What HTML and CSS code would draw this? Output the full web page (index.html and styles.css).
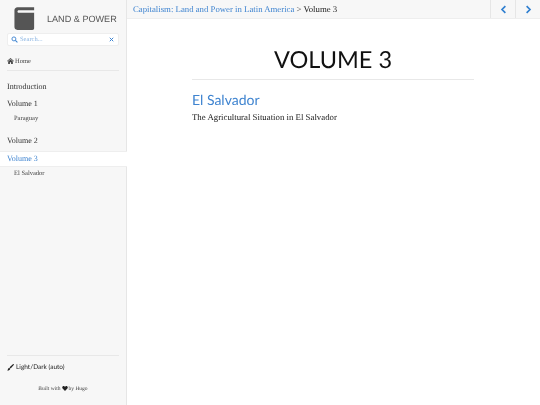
FILE: index.html
```html
<!DOCTYPE html>
<html lang="en">
<head>
<meta charset="utf-8">
<title>Volume 3</title>
<link rel="stylesheet" href="styles.css">
</head>
<body>
<div class="page">
  <aside class="sidebar">
    <div class="brand">
      <svg class="logo" viewBox="0 0 24 26" aria-hidden="true">
        <path fill="#555" d="M4 0H23V3.5H5.5C3.5 3.5 3.5 6.5 5.5 6.5H23V24C23 25.2 22.2 26 21 26H4C1.5 26 .5 24.5 .5 22.5V3.5C.5 1.5 2 0 4 0Z"/>
      </svg>
      <span class="brand-name">LAND &amp; POWER</span>
    </div>
    <div class="search">
      <svg class="search-icon" viewBox="0 0 12 12" aria-hidden="true"><circle cx="5" cy="5" r="3.4" fill="none" stroke="#3f84d0" stroke-width="1.6"/><path d="M7.5 7.5L11 11" stroke="#3f84d0" stroke-width="1.8"/></svg>
      <span class="search-text">Search...</span>
      <svg class="search-clear" viewBox="0 0 10 10" aria-hidden="true"><path d="M1.5 1.5L8.5 8.5M8.5 1.5L1.5 8.5" stroke="#3f84d0" stroke-width="2"/></svg>
    </div>
    <div class="home">
      <svg class="home-icon" viewBox="0 0 12 10" aria-hidden="true"><path fill="#444" d="M6 0L12 5.2L11.3 6L6 1.5L.7 6L0 5.2ZM2 6L6 2.6L10 6V10H7V7H5V10H2Z"/></svg>
      <span>Home</span>
    </div>
    <nav class="nav">
      <a class="nav-item first">Introduction</a>
      <a class="nav-item">Volume 1</a>
      <a class="nav-sub">Paraguay</a>
      <a class="nav-item">Volume 2</a>
      <a class="nav-item active">Volume 3</a>
      <a class="nav-sub">El Salvador</a>
    </nav>
    <div class="side-foot">
      <div class="theme">
        <svg class="theme-icon" viewBox="0 0 10 10" aria-hidden="true"><path fill="#222" d="M9.6.4C10 .8 10 1.2 9.6 1.6L5.2 6.3L3.7 4.8L8.4.4C8.8 0 9.2 0 9.6.4ZM3.2 5.4L4.6 6.8C4.4 8.6 2.6 9.7 .2 9.4C1.3 8.6 1.2 6.2 3.2 5.4Z"/></svg>
        <span>Light/Dark (auto)</span>
      </div>
      <div class="built">Built with <svg class="heart" viewBox="0 0 10 9" aria-hidden="true"><path fill="#222" d="M5 9L.7 4.6C-.3 3.5-.2 1.7.8.8 1.9-.2 3.8 0 5 1.5 6.2 0 8.1-.2 9.2.8 10.2 1.7 10.3 3.5 9.3 4.6Z"/></svg> by Hugo</div>
    </div>
  </aside>
  <div class="main">
    <header class="topbar">
      <div class="crumbs"><a class="link">Capitalism: Land and Power in Latin America</a> <span class="sep">&gt;</span> Volume 3</div>
      <div class="pager">
        <span class="pager-btn"><svg viewBox="0 0 8 12" aria-hidden="true"><path d="M6.5 1.5L2 6L6.5 10.5" fill="none" stroke="#2f7fd0" stroke-width="2.2"/></svg></span>
        <span class="pager-btn"><svg viewBox="0 0 8 12" aria-hidden="true"><path d="M1.5 1.5L6 6L1.5 10.5" fill="none" stroke="#2f7fd0" stroke-width="2.2"/></svg></span>
      </div>
    </header>
    <main class="content">
      <h1 class="title">VOLUME 3</h1>
      <h2 class="section"><a class="link">El Salvador</a></h2>
      <p class="summary">The Agricultural Situation in El Salvador</p>
    </main>
  </div>
</div>
</body>
</html>
```

FILE: styles.css
```css
* { box-sizing: border-box; }
html, body { margin: 0; height: 100%; }
body { font-family: "Liberation Serif", serif; color: #222; background: #fff; text-rendering: geometricPrecision; }
.page { display: flex; width: 540px; height: 405px; overflow: hidden; filter: blur(0.25px); background: #fff; }
.sidebar { width: 127px; flex: none; display: flex; flex-direction: column; background: #f7f7f7; border-right: 1px solid #e6e6e6; }
.brand { display: flex; align-items: center; height: 33px; padding: 5px 0 0 14px; }
.logo { width: 21px; height: 23px; flex: none; margin-top: -1px; }
.brand-name { font-family: "Liberation Sans", sans-serif; font-size: 9.1px; color: #555; margin-left: 12px; line-height: 12px; white-space: nowrap; }
.search { display: flex; align-items: center; height: 13px; margin: 0 7px; padding: 0 3px; background: #fff; border: 1px solid #eee; border-radius: 2px; }
.search-icon { width: 7px; height: 7px; flex: none; }
.search-text { flex: 1; font-size: 6.5px; color: #8db6e2; margin-left: 2px; }
.search-clear { width: 5px; height: 5px; flex: none; margin-right: 1px; }
.home { display: flex; align-items: center; gap: 1px; height: 25px; margin: 0 7px; padding-top: 7px; font-size: 6.5px; color: #444; border-bottom: 1px solid #e8e8e8; }
.home-icon { width: 7px; height: 6px; margin-top: -2px; }
.nav { display: flex; flex-direction: column; }
.nav-item { display: flex; align-items: center; height: 17px; padding-left: 7px; font-size: 8px; color: #333; }
.nav-item.first { margin-top: 7px; }
.nav-item.active { height: 16px; margin-top: 2px; padding-bottom: 2px; color: #3f84d0; background: #fff; border-top: 1px solid #eee; border-bottom: 1px solid #eee; width: 127px; }
.nav-sub { display: flex; align-items: center; height: 13px; padding-left: 14px; font-size: 6.5px; color: #444; }
.nav-sub + .nav-item { margin-top: 7px; }
.side-foot { margin-top: auto; padding: 0 7px; }
.theme { display: flex; align-items: center; gap: 2px; height: 23px; border-top: 1px solid #e8e8e8; font-family: Lato, sans-serif; font-size: 6.5px; color: #222; }
.theme-icon { width: 7px; height: 7px; }
.built { display: flex; align-items: center; justify-content: center; gap: 1px; height: 10px; margin: 6px 0 11px; font-size: 5.5px; color: #444; }
.heart { width: 6px; height: 5px; margin-top: -1px; }
.main { flex: 1; display: flex; flex-direction: column; min-width: 0; }
.topbar { display: flex; justify-content: space-between; align-items: center; height: 19px; background: #f7f7f7; border-bottom: 1px solid #eee; padding-left: 6px; }
.crumbs { font-size: 8.75px; color: #222; white-space: nowrap; }
.link { color: #3f84d0; }
.sep { color: #555; }
.pager { display: flex; height: 100%; }
.pager-btn { display: flex; align-items: center; justify-content: center; width: 25px; border-left: 1px solid #e6e6e6; height: 100%; }
.pager-btn svg { width: 7px; height: 9px; }
.content { width: 282px; margin-left: 65px; }
.title { margin: 25px 0 0; padding-bottom: 2px; border-bottom: 1px solid #e8e8e8; font-family: Lato, sans-serif; font-size: 23.5px; font-weight: 400; line-height: 33px; text-align: center; color: #111; }
.section { margin: 11px 0 0; font-family: Lato, sans-serif; font-size: 14px; font-weight: 400; line-height: 18px; }
.summary { margin: 2px 0 0; font-size: 8.8px; line-height: 12px; color: #222; }
```
